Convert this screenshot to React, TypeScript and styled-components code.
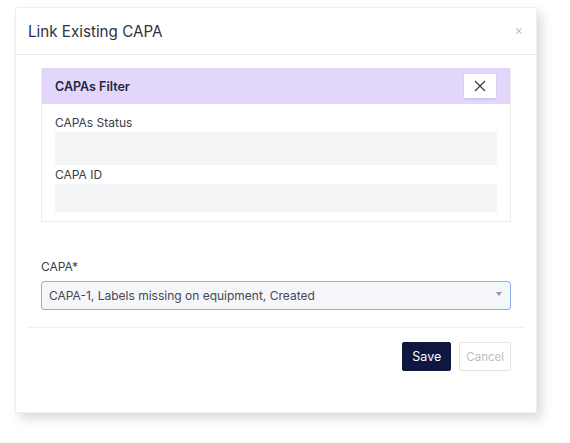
import React from "react";
import styled, { createGlobalStyle } from "styled-components";

const GlobalStyle = createGlobalStyle`
  html, body {
    margin: 0;
    padding: 0;
    background: #ffffff;
  }
  body {
    font-family: "Inter", "Liberation Sans", sans-serif;
    color: #2b2f3a;
  }
`;

const Page = styled.div`
  padding: 7px 0 0 15px;
  width: 570px;
  height: 443px;
  box-sizing: border-box;
`;

const Modal = styled.div`
  width: 522px;
  height: 406px;
  box-sizing: border-box;
  background: #fff;
  border: 1px solid #eeeeee;
  box-shadow: 5px 6px 10px rgba(0, 0, 0, 0.14);
  display: flex;
  flex-direction: column;
`;

const Header = styled.div`
  height: 47px;
  box-sizing: border-box;
  display: flex;
  align-items: center;
  justify-content: space-between;
  padding: 0 13px 0 12px;
  border-bottom: 1px solid #e9eaec;
`;

const Title = styled.h4`
  margin: 0;
  font-size: 15.2px;
  font-weight: 400;
  color: #2e3240;
`;

const CloseX = styled.span`
  font-size: 13px;
  color: #c4c4c4;
  line-height: 1;
  margin-top: -2px;
`;

const Body = styled.div`
  padding: 13px 25px 0 25px;
`;

const FilterCard = styled.div`
  border: 1px solid #ebebeb;
  border-top: none;
`;

const FilterHeader = styled.div`
  height: 36px;
  background: #e2d7fb;
  display: flex;
  align-items: center;
  justify-content: space-between;
  padding: 0 14px 0 13px;
`;

const FilterTitle = styled.span`
  font-size: 12.5px;
  font-weight: 600;
  color: #23263a;
`;

const IconButton = styled.button`
  width: 32px;
  height: 24px;
  border: none;
  background: #fff;
  box-shadow: 0 1px 2px rgba(0, 0, 0, 0.12);
  display: flex;
  align-items: center;
  justify-content: center;
  padding: 0;
`;

const FilterBody = styled.div`
  padding: 11px 13px 9px 13px;
  display: flex;
  flex-direction: column;
`;

const Label = styled.label<{ $gap?: number }>`
  font-size: 12px;
  color: #3a3d48;
  display: block;
  margin-bottom: ${(p) => p.$gap ?? 1}px;
  line-height: 16px;
`;

const GreyInput = styled.div<{ $h: number }>`
  height: ${(p) => p.$h}px;
  background: #f4f5f7;
  margin-bottom: 2px;
  &:last-child {
    margin-bottom: 0;
  }
`;

const Field = styled.div`
  margin-top: 37px;
`;

const Select = styled.div`
  height: 29px;
  box-sizing: border-box;
  border: 1px solid #8fb1ea;
  border-radius: 3px;
  background: #f4f6f9;
  display: flex;
  align-items: center;
  justify-content: space-between;
  padding: 0 8px 0 7px;
  font-size: 12px;
  color: #454854;
`;

const Caret = styled.span`
  width: 0;
  height: 0;
  border-left: 3px solid transparent;
  border-right: 3px solid transparent;
  border-top: 4px solid #9a9a9a;
  margin-top: -3px;
`;

const Divider = styled.div`
  margin: 17px 12px 0 12px;
  border-top: 1px solid #efefef;
`;

const Footer = styled.div`
  display: flex;
  justify-content: flex-end;
  gap: 8px;
  padding: 14px 25px 0 0;
`;

const Button = styled.button<{ $primary?: boolean }>`
  height: 29px;
  box-sizing: border-box;
  padding: 0 ${(p) => (p.$primary ? 9 : 6)}px;
  font-family: inherit;
  font-size: ${(p) => (p.$primary ? 12.5 : 11.5)}px;
  border-radius: 2px;
  border: 1px solid ${(p) => (p.$primary ? "#0f1741" : "#e4e4e4")};
  background: ${(p) => (p.$primary ? "#0f1741" : "#fff")};
  color: ${(p) => (p.$primary ? "#fff" : "#bdbdbd")};
`;

export default function App() {
  return (
    <Page>
      <GlobalStyle />
      <Modal>
        <Header>
          <Title>Link Existing CAPA</Title>
          <CloseX>×</CloseX>
        </Header>
        <Body>
          <FilterCard>
            <FilterHeader>
              <FilterTitle>CAPAs Filter</FilterTitle>
              <IconButton>
                <svg width="12" height="12" viewBox="0 0 12 12">
                  <path d="M1 1 L11 11 M11 1 L1 11" stroke="#3a3a3a" strokeWidth="1.2" />
                </svg>
              </IconButton>
            </FilterHeader>
            <FilterBody>
              <Label>CAPAs Status</Label>
              <GreyInput $h={33} />
              <Label>CAPA ID</Label>
              <GreyInput $h={28} />
            </FilterBody>
          </FilterCard>
          <Field>
            <Label $gap={6}>CAPA*</Label>
            <Select>
              <span>CAPA-1, Labels missing on equipment, Created</span>
              <Caret />
            </Select>
          </Field>
        </Body>
        <Divider />
        <Footer>
          <Button $primary>Save</Button>
          <Button>Cancel</Button>
        </Footer>
      </Modal>
    </Page>
  );
}
